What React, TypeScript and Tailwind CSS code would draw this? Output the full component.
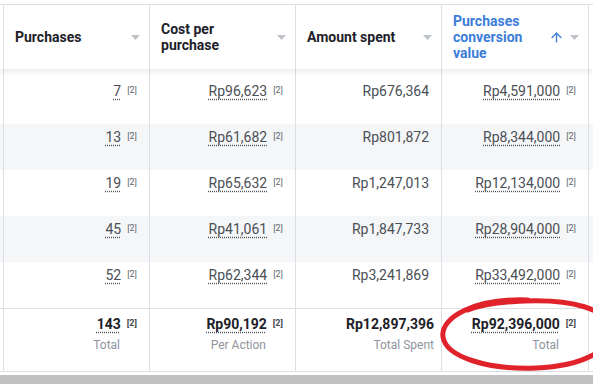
import React from 'react';
import { ArrowUp } from 'lucide-react';

type Row = { purchases: string; cpp: string; spent: string; value: string };

const rows: Row[] = [
  { purchases: '7', cpp: 'Rp96,623', spent: 'Rp676,364', value: 'Rp4,591,000' },
  { purchases: '13', cpp: 'Rp61,682', spent: 'Rp801,872', value: 'Rp8,344,000' },
  { purchases: '19', cpp: 'Rp65,632', spent: 'Rp1,247,013', value: 'Rp12,134,000' },
  { purchases: '45', cpp: 'Rp41,061', spent: 'Rp1,847,733', value: 'Rp28,904,000' },
  { purchases: '52', cpp: 'Rp62,344', spent: 'Rp3,241,869', value: 'Rp33,492,000' },
];

const cols = 'grid grid-cols-[146px_146px_146px_147px_1fr]';

function Caret() {
  return (
    <svg width="9" height="5" viewBox="0 0 9 5" className="shrink-0">
      <path d="M0 0h9L4.5 5z" fill="#bec2c9" />
    </svg>
  );
}

function Note({ bold }: { bold?: boolean }) {
  return (
    <span
      className={`ml-[6px] mt-[5px] text-[9px] leading-none ${
        bold ? 'text-[#444950] font-bold' : 'text-[#606770]'
      }`}
    >
      [2]
    </span>
  );
}

function Dotted({ children }: { children: React.ReactNode }) {
  return (
    <span className="underline decoration-dotted decoration-[#4b4f56] underline-offset-[3px]">
      {children}
    </span>
  );
}

function HeadCell({ children, active }: { children: React.ReactNode; active?: boolean }) {
  return (
    <div className="border-r border-[#dddfe2] flex items-center justify-between pl-[11px] pr-[9px]">
      <div
        className={`text-[14px] leading-[16px] font-bold ${
          active ? 'text-[#3b7dd8]' : 'text-[#1d2129]'
        }`}
      >
        {children}
      </div>
      <div className="flex items-center gap-[6px]">
        {active && <ArrowUp className="w-[15px] h-[15px] text-[#3b7dd8]" strokeWidth={2.2} />}
        <Caret />
      </div>
    </div>
  );
}

function Cell({ children }: { children: React.ReactNode }) {
  return (
    <div className="border-r border-[#dddfe2] flex justify-end items-start pr-[12px] text-[14px] leading-[20px] text-[#4b4f56]">
      {children}
    </div>
  );
}

export default function App() {
  return (
    <div
      className="w-[593px] h-[384px] bg-white overflow-hidden relative"
      style={{ fontFamily: 'Roboto, "Liberation Sans", sans-serif' }}
    >
      <div className="pt-[4px]">
        {/* header */}
        <div className="relative z-10 bg-white border-t border-[#dddfe2] shadow-[0_3px_6px_rgba(0,0,0,0.08)]">
          <div className={`${cols} h-[64px] ml-[3px] border-l border-[#dddfe2]`}>
            <HeadCell>Purchases</HeadCell>
            <HeadCell>
              Cost per
              <br />
              purchase
            </HeadCell>
            <HeadCell>Amount spent</HeadCell>
            <HeadCell active>
              Purchases
              <br />
              conversion
              <br />
              value
            </HeadCell>
            <div />
          </div>
        </div>

        {/* body */}
        {rows.map((r, i) => (
          <div key={i} className={i % 2 === 1 ? 'bg-[#f5f6f7]' : 'bg-white'}>
            <div
              className={`${cols} ml-[3px] border-l border-[#dddfe2] ${
                i === 0 ? 'h-[55px] [&>div]:pt-[12px]' : 'h-[46px] [&>div]:pt-[3px]'
              }`}
            >
              <Cell>
                <Dotted>{r.purchases}</Dotted>
                <Note />
              </Cell>
              <Cell>
                <Dotted>{r.cpp}</Dotted>
                <Note />
              </Cell>
              <Cell>{r.spent}</Cell>
              <Cell>
                <Dotted>{r.value}</Dotted>
                <Note />
              </Cell>
              <div />
            </div>
          </div>
        ))}

        {/* totals */}
        <div className="border-t border-b border-[#dddfe2]">
          <div className={`${cols} h-[62px] ml-[3px] border-l border-[#dddfe2]`}>
            {[
              { v: '143', l: 'Total', dot: true },
              { v: 'Rp90,192', l: 'Per Action', dot: true },
              { v: 'Rp12,897,396', l: 'Total Spent', dot: false },
              { v: 'Rp92,396,000', l: 'Total', dot: true },
            ].map((t, i) => (
              <div
                key={i}
                className={`border-r border-[#dddfe2] flex flex-col items-end pt-[5px] ${
                  t.dot ? 'pr-[12px]' : 'pr-[7px]'
                }`}
              >
                <div className="flex items-start text-[14px] leading-[20px] font-bold text-[#1d2129]">
                  {t.dot ? <Dotted>{t.v}</Dotted> : t.v}
                  {t.dot && <Note bold />}
                </div>
                <div className={`mt-[3px] text-[12px] leading-[16px] text-[#90949c] ${t.dot ? 'pr-[17px]' : ''}`}>
                  {t.l}
                </div>
              </div>
            ))}
            <div />
          </div>
        </div>

        {/* horizontal scrollbar */}
        <div className="mt-[3px] h-[12px] bg-[#c1c1c1]" />
      </div>

      {/* hand-drawn highlight */}
      <svg
        className="absolute left-[436px] top-[293px] pointer-events-none"
        width="180"
        height="82"
        viewBox="0 0 180 82"
      >
        <path
          d="M92 7 C40 5 4 24 7 44 C10 64 52 77 100 75 C146 73 176 58 174 36 C172 16 136 6 88 8 C62 9 42 13 32 17"
          fill="none"
          stroke="#e0232a"
          strokeWidth="5"
          strokeLinecap="round"
        />
      </svg>
    </div>
  );
}
